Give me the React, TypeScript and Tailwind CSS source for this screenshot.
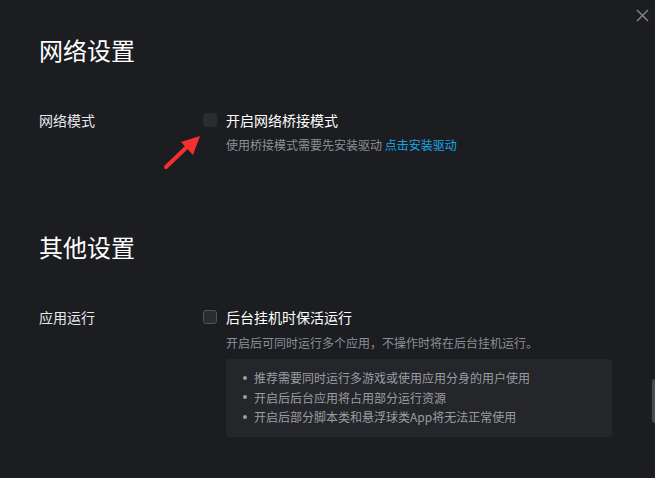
import React from "react";

const font = { fontFamily: '"Noto Sans CJK SC", "Microsoft YaHei", sans-serif' };

export default function App() {
  return (
    <div
      className="relative w-[655px] h-[478px] bg-[#1c1d21] overflow-hidden text-[#e6e7ea]"
      style={font}
    >
      {/* close */}
      <svg className="absolute left-[636px] top-[9px]" width="13" height="13" viewBox="0 0 13 13">
        <path d="M1 1L12 12M12 1L1 12" stroke="#8b8c90" strokeWidth="1.3" />
      </svg>

      {/* scrollbar */}
      <div className="absolute left-[652px] top-[379px] w-[3px] h-[44px] rounded-l bg-[#4a4b50]" />

      <div className="pl-[39px] pt-[34px]">
        <h1 className="text-[24px] leading-[32px] text-white">网络设置</h1>

        <div className="flex mt-[45px]">
          <div className="w-[164px] text-[14px] leading-[18px] text-[#e6e7ea]">网络模式</div>
          <div className="flex flex-col">
            <div className="flex items-center h-[18px]">
              <div className="w-[14px] h-[14px] rounded-[3px] bg-[#2a2b2f]" />
              <span className="ml-[9px] text-[14px] text-white">开启网络桥接模式</span>
            </div>
            <div className="ml-[23px] mt-[8px] text-[12px] leading-[16px] text-[#8c8f96]">
              使用桥接模式需要先安装驱动 <span className="text-[#1aa5e6]">点击安装驱动</span>
            </div>
          </div>
        </div>

        <h1 className="mt-[78px] text-[24px] leading-[32px] text-white">其他设置</h1>

        <div className="flex mt-[45px]">
          <div className="w-[164px] text-[14px] leading-[18px] text-[#e6e7ea]">应用运行</div>
          <div className="flex flex-col">
            <div className="flex items-center h-[18px]">
              <div className="w-[14px] h-[14px] rounded-[3px] bg-[#2b2c30] border border-[#515258]" />
              <span className="ml-[9px] text-[14px] text-white">后台挂机时保活运行</span>
            </div>
            <div className="ml-[23px] mt-[9px] text-[12px] leading-[16px] text-[#8c8f96]">
              开启后可同时运行多个应用，不操作时将在后台挂机运行。
            </div>
            <div className="ml-[23px] mt-[8px] w-[386px] h-[78px] rounded-[3px] bg-[#25262a] pl-[17px] pt-[9px] text-[12px] leading-[19.5px] text-[#9a9da3]">
              <div className="flex items-center">
                <span className="w-[4px] h-[4px] rounded-full bg-[#9a9da3]" />
                <span className="ml-[7px]">推荐需要同时运行多游戏或使用应用分身的用户使用</span>
              </div>
              <div className="flex items-center">
                <span className="w-[4px] h-[4px] rounded-full bg-[#9a9da3]" />
                <span className="ml-[7px]">开启后后台应用将占用部分运行资源</span>
              </div>
              <div className="flex items-center">
                <span className="w-[4px] h-[4px] rounded-full bg-[#9a9da3]" />
                <span className="ml-[7px]">开启后部分脚本类和悬浮球类App将无法正常使用</span>
              </div>
            </div>
          </div>
        </div>
      </div>

      {/* red arrow */}
      <svg className="absolute left-0 top-0" width="655" height="478" viewBox="0 0 655 478">
        <line x1="166" y1="167" x2="189" y2="145" stroke="#f5312f" strokeWidth="4" strokeLinecap="round" />
        <polygon points="200,136 181,142 193,155" fill="#f5312f" />
      </svg>
    </div>
  );
}
